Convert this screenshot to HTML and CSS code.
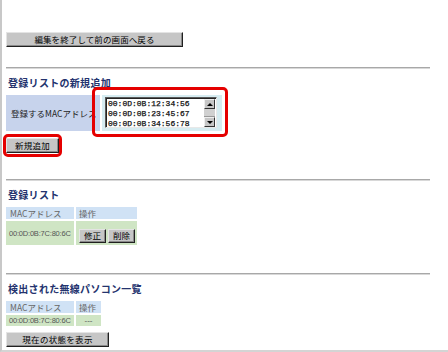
FILE: index.html
```html
<!DOCTYPE html>
<html lang="ja">
<head>
<meta charset="utf-8">
<title>MACアドレス登録</title>
<link rel="stylesheet" href="styles.css">
</head>
<body>
<div class="frame">
  <button class="btn btn-back" type="button">編集を終了して前の画面へ戻る</button>
  <hr class="rule">

  <h2 class="heading">登録リストの新規追加</h2>
  <table class="grid add-table">
    <tr>
      <td class="label-cell">登録するMACアドレス</td>
      <td class="input-cell">
        <div class="textarea">
          <div class="ta-text">00:0D:0B:12:34:56<br>00:0D:0B:23:45:67<br>00:0D:0B:34:56:78</div>
          <div class="scrollbar">
            <span class="sb-btn"><span class="arrow-up"></span></span>
            <span class="sb-thumb"></span>
            <span class="sb-btn"><span class="arrow-down"></span></span>
          </div>
        </div>
        <span class="highlight hl-input"></span>
      </td>
    </tr>
  </table>
  <div class="add-wrap">
    <button class="btn btn-add" type="button">新規追加</button>
    <span class="highlight hl-add"></span>
  </div>
  <hr class="rule rule-2">

  <h2 class="heading">登録リスト</h2>
  <table class="grid list-table">
    <tr class="head-row">
      <th class="col-mac">MACアドレス</th>
      <th class="col-op">操作</th>
    </tr>
    <tr class="data-row">
      <td class="mac">00:0D:0B:7C:80:6C</td>
      <td class="ops"><button class="btn btn-small" type="button">修正</button><button class="btn btn-small" type="button">削除</button></td>
    </tr>
  </table>
  <hr class="rule rule-3">

  <h2 class="heading">検出された無線パソコン一覧</h2>
  <table class="grid list-table found-table">
    <tr class="head-row">
      <th class="col-mac">MACアドレス</th>
      <th class="col-op2">操作</th>
    </tr>
    <tr class="data-row short">
      <td class="mac">00:0D:0B:7C:80:6C</td>
      <td class="dash">---</td>
    </tr>
  </table>
  <button class="btn btn-status" type="button">現在の状態を表示</button>
</div>
</body>
</html>
```

FILE: styles.css
```css
html, body {
  margin: 0;
  padding: 0;
  background: #fff;
}
body {
  font-family: "Noto Sans CJK JP", "Liberation Sans", sans-serif;
  color: #000;
}
.frame {
  box-sizing: border-box;
  width: 448px;
  height: 352px;
  border-left: 2px solid #c8c8c8;
  border-bottom: 2px solid #d4d4d4;
  padding: 32px 0 0 4px;
}
.btn {
  display: block;
  box-sizing: border-box;
  margin: 0;
  padding: 0;
  background: #c6c6c6;
  border: 1px solid;
  border-color: #e4e4e4 #202020 #202020 #e4e4e4;
  box-shadow: inset -1px -1px 0 #8a8a8a;
  font-family: "Noto Sans CJK JP", sans-serif;
  font-size: 8.5px;
  line-height: 1;
  color: #000;
  text-align: center;
}
.btn-back {
  width: 177px;
  height: 15px;
  letter-spacing: 0.1px;
}
.rule {
  width: 424px;
  height: 0;
  margin: 20px 0 0 0;
  border: 0;
  border-top: 1px solid #a8a8a8;
  border-bottom: 1px solid #d8d8d8;
}
.rule-2, .rule-3 {
  margin-top: 26px;
}
.heading {
  margin: 8px 0 0 2px;
  font-size: 10px;
  line-height: 12px;
  font-weight: bold;
  color: #24336e;
  letter-spacing: 0.3px;
}
.grid {
  border-collapse: separate;
  border-spacing: 2px;
  margin: 4px 0 0 -2px;
}
.grid td, .grid th {
  padding: 0;
}
.label-cell {
  width: 94px;
  height: 36px;
  background: #c7d3ec;
  font-size: 8.5px;
  color: #222;
  padding-left: 5px !important;
  box-sizing: border-box;
  vertical-align: middle;
  white-space: nowrap;
}
.input-cell {
  position: relative;
  width: 120px;
  height: 36px;
  background: #d6ecf1;
  box-sizing: border-box;
  padding: 2px 5px 3px 3px !important;
  vertical-align: top;
}
.textarea {
  display: flex;
  box-sizing: border-box;
  width: 112px;
  height: 31px;
  background: #fff;
  border: 1px solid;
  border-color: #5a5a5a #e8e8e8 #e8e8e8 #5a5a5a;
  box-shadow: inset 1px 1px 0 #222;
}
.ta-text {
  flex: 1;
  padding: 1px 0 0 2px;
  font-family: "Liberation Mono", monospace;
  font-size: 8px;
  line-height: 10px;
  color: #111;
  white-space: nowrap;
  overflow: hidden;
  -webkit-text-stroke: 0.25px #111;
}
.scrollbar {
  display: flex;
  flex-direction: column;
  width: 11px;
  margin: 1px 1px 0 0;
  background: #e6e6e6;
}
.sb-btn {
  display: flex;
  align-items: center;
  justify-content: center;
  box-sizing: border-box;
  height: 10px;
  background: #c6c6c6;
  border: 1px solid;
  border-color: #eee #333 #333 #eee;
}
.sb-thumb {
  flex: 1;
  background: #d0d0d0;
  border-bottom: 1px solid #999;
}
.arrow-up, .arrow-down {
  width: 0;
  height: 0;
  border-left: 3px solid transparent;
  border-right: 3px solid transparent;
}
.arrow-up { border-bottom: 3px solid #000; }
.arrow-down { border-top: 3px solid #000; }
.highlight {
  position: absolute;
  box-sizing: border-box;
  border: 3px solid #e50000;
  border-radius: 5px;
  pointer-events: none;
}
.hl-input {
  top: -8px;
  bottom: -6px;
  left: -10px;
  right: -6px;
}
.add-wrap {
  position: relative;
  width: 53px;
  margin-top: 5px;
}
.btn-add {
  width: 53px;
  height: 15px;
  letter-spacing: 0.3px;
}
.hl-add {
  top: -4px;
  bottom: -4px;
  left: -3px;
  right: -3px;
}
.head-row th {
  height: 12px;
  background: #d0e2f5;
  font-size: 8.5px;
  font-weight: normal;
  color: #666;
  text-align: left;
  padding-left: 4px;
  box-sizing: border-box;
  line-height: 12px;
}
.col-mac { width: 68px; }
.col-op { width: 61px; padding-left: 3px !important; }
.col-op2 { width: 25px; padding-left: 3px !important; }
.data-row td {
  height: 17px;
  background: #cfe5c4;
  box-sizing: border-box;
}
.data-row.short td { height: 11px; }
.mac {
  font-family: "Liberation Sans", sans-serif;
  font-size: 7.5px;
  color: #555;
  letter-spacing: -0.2px;
  padding-left: 3px !important;
  line-height: 11px;
}
.ops {
  padding: 0 0 0 3px !important;
}
.ops .btn-small {
  display: inline-block;
  vertical-align: middle;
}
.btn-small {
  width: 27px;
  height: 14px;
  font-size: 8.5px;
  margin-right: 2px !important;
}
.dash {
  text-align: center;
  font-family: "Liberation Sans", sans-serif;
  font-size: 8px;
  color: #555;
  line-height: 11px;
}
.btn-status {
  width: 103px;
  height: 15px;
  margin-top: 4px;
  letter-spacing: 0.3px;
}
```
